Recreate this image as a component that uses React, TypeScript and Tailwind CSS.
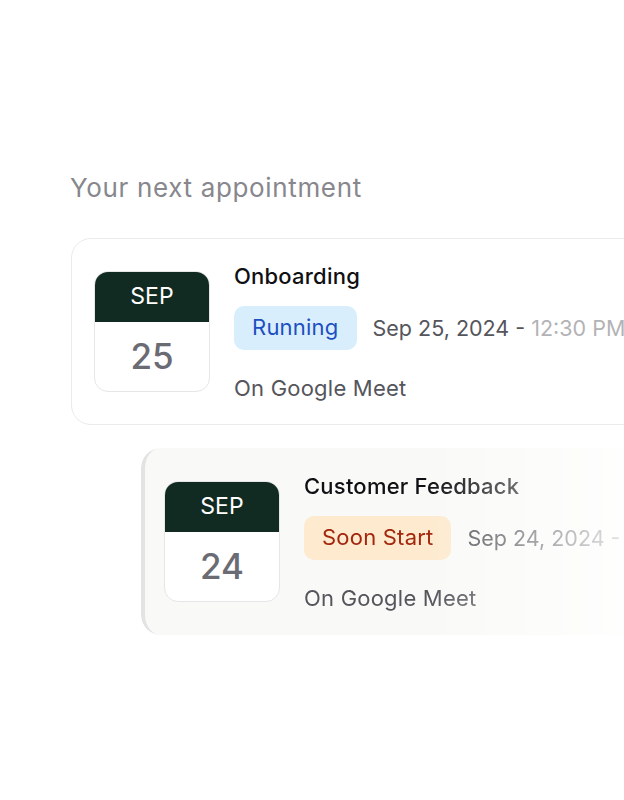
import React from "react";

function CalendarBox({ day }: { day: string }) {
  return (
    <div className="flex h-[121px] w-[116px] shrink-0 flex-col overflow-hidden rounded-[14px] border-[1.5px] border-[#e6e6e6] bg-white">
      <div className="-mx-[1.5px] -mt-[1.5px] flex h-[51.5px] items-center justify-center bg-[#122b22] text-[23px] leading-none text-white">
        SEP
      </div>
      <div className="flex flex-1 items-center justify-center text-[35px] font-medium leading-none text-[#6b6b74]">
        {day}
      </div>
    </div>
  );
}

function Card({
  title,
  badge,
  badgeClass,
  date,
  time,
  day,
  className,
}: {
  title: string;
  badge: string;
  badgeClass: string;
  date: string;
  time: string;
  day: string;
  className: string;
}) {
  return (
    <div className={className}>
      <CalendarBox day={day} />
      <div className="flex min-w-0 flex-col">
        <div className="text-[22px] font-medium leading-[28px] tracking-[0.01em] text-[#101014]">{title}</div>
        <div className="mt-[16px] flex items-center gap-[16px] whitespace-nowrap">
          <span className={badgeClass}>{badge}</span>
          <span className="text-[21.5px] leading-[28px] text-[#55555c]">
            {date} <span className="text-[#b3b3b6]">{time}</span>
          </span>
        </div>
        <div className="mt-[24px] text-[22px] leading-[28px] tracking-[0.01em] text-[#55555c]">On Google Meet</div>
      </div>
    </div>
  );
}

export default function App() {
  return (
    <div
      className="relative h-[800px] w-[624px] overflow-hidden bg-white"
      style={{ fontFamily: "Inter, 'Noto Sans', sans-serif" }}
    >
      <div className="flex flex-col pl-[70px] pt-[172px]">
        <h2 className="text-[26px] font-normal leading-[32px] tracking-[0.025em] text-[#87878d]">Your next appointment</h2>
        <Card
          title="Onboarding"
          badge="Running"
          badgeClass="flex h-[44px] items-center rounded-[10px] bg-[#d9eefd] px-[18px] text-[22px] tracking-[0.01em] text-[#1c4fc0]"
          date="Sep 25, 2024 -"
          time="12:30 PM"
          day="25"
          className="mt-[34px] ml-[1px] flex h-[187px] w-[640px] shrink-0 items-center gap-[24px] rounded-[20px] border-[1.5px] border-[#ebebeb] bg-white pl-[22px]"
        />
        <Card
          title="Customer Feedback"
          badge="Soon Start"
          badgeClass="flex h-[44px] items-center rounded-[10px] bg-[#fdeacf] px-[18px] text-[22px] tracking-[0.01em] text-[#a3270c]"
          date="Sep 24, 2024 -"
          time="1:00 PM"
          day="24"
          className="mt-[23px] ml-[71px] flex h-[187px] w-[520px] shrink-0 items-center gap-[24px] rounded-[20px] border-l-4 border-[#e3e3e3] bg-[#f9f9f7] pl-[19px] [mask-image:linear-gradient(to_right,black_55%,transparent_100%)]"
        />
      </div>
    </div>
  );
}
